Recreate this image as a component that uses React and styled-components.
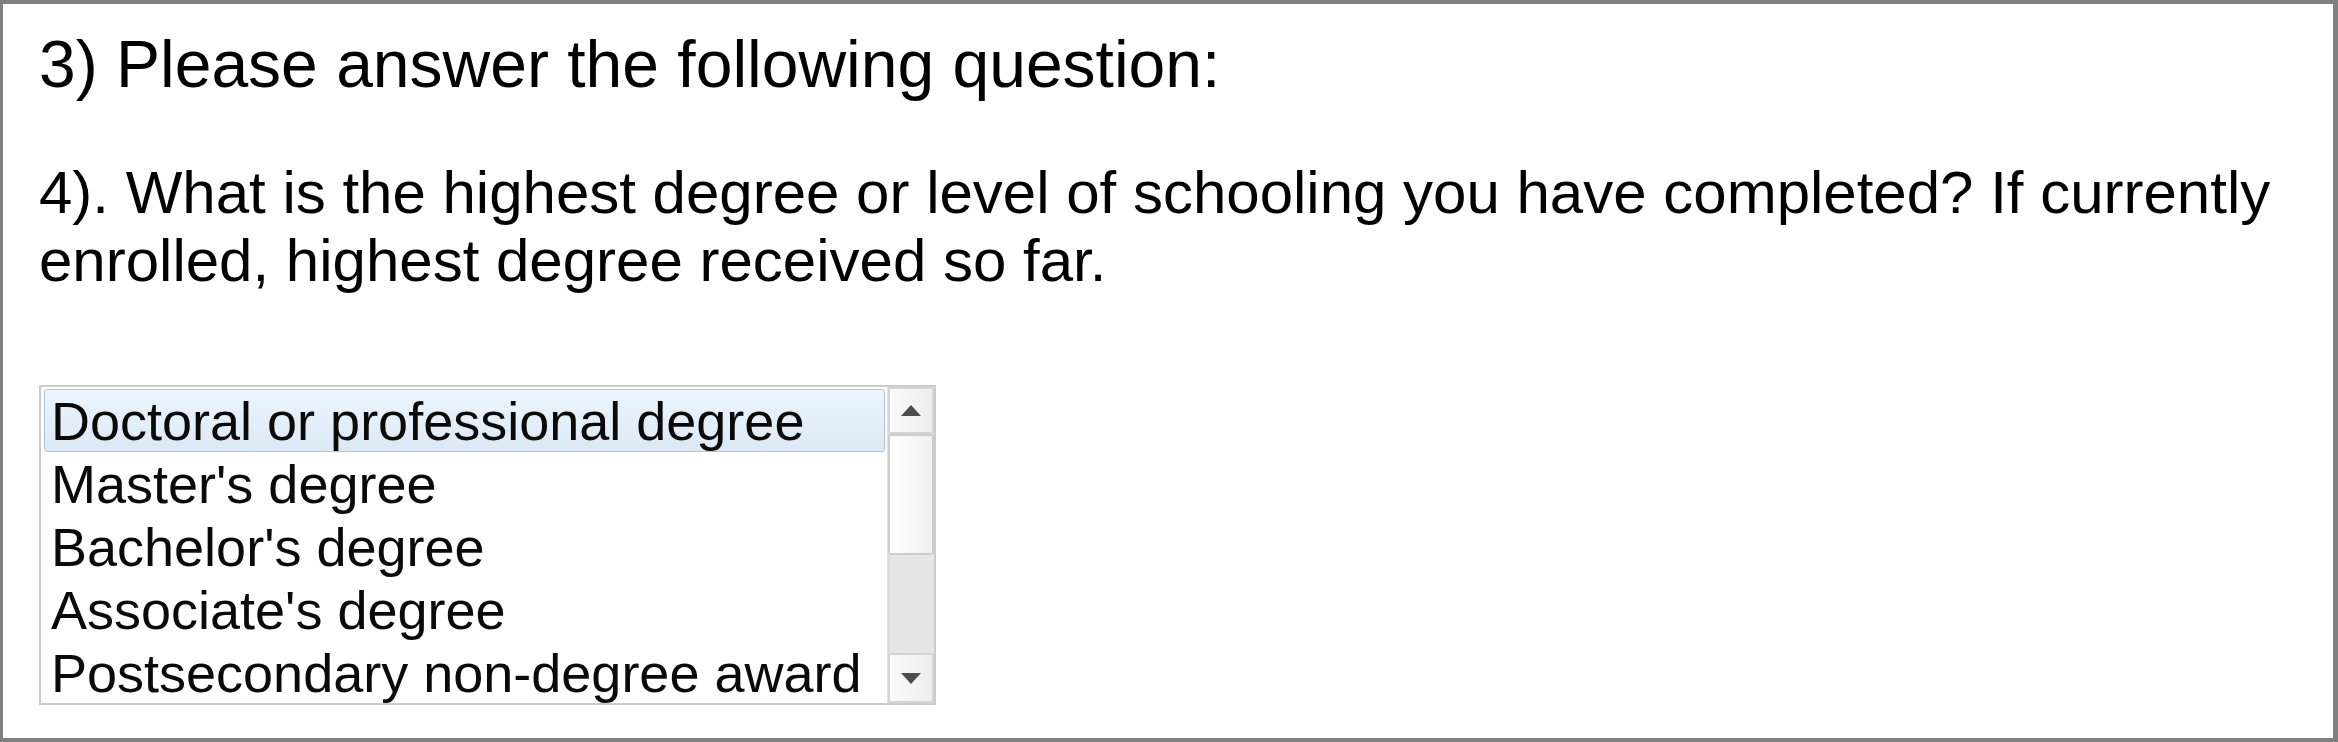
import styled, { createGlobalStyle } from 'styled-components'

const GlobalStyle = createGlobalStyle`
    html, body {
        margin: 0;
        padding: 0;
        background: #ffffff;
    }
    body {
        font-family: "Liberation Sans", Arial, sans-serif;
    }
`

const Frame = styled.div`
    box-sizing: border-box;
    width: 2338px;
    height: 742px;
    border-style: solid;
    border-color: #808080;
    border-width: 4px 5px 4px 3px;
    padding: 23px 40px 0 36px;
    background: #ffffff;
    color: #000000;
`

const Heading = styled.div`
    font-size: 66px;
    line-height: 75px;
`

const Question = styled.p`
    margin: 57px 0 0;
    font-size: 60px;
    line-height: 68px;
`

const ListBox = styled.div`
    box-sizing: border-box;
    margin-top: 90px;
    width: 897px;
    height: 320px;
    border: 2px solid #cbcbcb;
    display: flex;
    background: #ffffff;
`

const Options = styled.ul`
    list-style: none;
    margin: 0;
    padding: 2px 2px 0 3px;
    flex: 1;
    display: flex;
    flex-direction: column;
`

const Option = styled.li`
    box-sizing: border-box;
    height: 63px;
    display: flex;
    align-items: center;
    padding: 0 0 0 6px;
    font-size: 54px;
    color: #0a0a0a;
    white-space: nowrap;
    border: 1px solid ${p => (p.$selected ? '#a9c6dc' : 'transparent')};
    border-radius: 3px;
    background: ${p => (p.$selected ? 'linear-gradient(#ebf5fd, #dce9f5)' : 'transparent')};
`

const Scrollbar = styled.div`
    width: 46px;
    display: flex;
    flex-direction: column;
    border-left: 1px solid #e2e2e2;
    background: #e6e6e6;
`

const ArrowButton = styled.div`
    box-sizing: border-box;
    height: ${p => p.$h}px;
    display: flex;
    align-items: center;
    justify-content: center;
    border: 2px solid #d4d4d4;
    border-radius: 2px;
    background: linear-gradient(90deg, #fafafa, #eeeeee);
`

const Thumb = styled.div`
    box-sizing: border-box;
    height: 121px;
    border: 2px solid #cdcdcd;
    border-radius: 3px;
    background: linear-gradient(90deg, #ffffff, #f1f1f1);
`

const Track = styled.div`
    flex: 1;
    background: #e6e6e6;
    border-left: 2px solid #dadada;
`

const Triangle = ({ up }) => (
    <svg width="20" height="11" viewBox="0 0 20 11">
        <polygon points={up ? '10,0 20,11 0,11' : '0,0 20,0 10,11'} fill="#4d4d4d" />
    </svg>
)

const degrees = [
    'Doctoral or professional degree',
    "Master's degree",
    "Bachelor's degree",
    "Associate's degree",
    'Postsecondary non-degree award',
]

function App() {
    return (
        <>
            <GlobalStyle />
            <Frame>
                <Heading>3) Please answer the following question:</Heading>
                <Question>
                    4). What is the highest degree or level of schooling you have completed? If currently enrolled, highest degree received so far.
                </Question>
                <ListBox role="listbox">
                    <Options>
                        {degrees.map((d, i) => (
                            <Option key={d} $selected={i === 0} role="option">
                                {d}
                            </Option>
                        ))}
                    </Options>
                    <Scrollbar>
                        <ArrowButton $h={47}>
                            <Triangle up />
                        </ArrowButton>
                        <Thumb />
                        <Track />
                        <ArrowButton $h={50}>
                            <Triangle />
                        </ArrowButton>
                    </Scrollbar>
                </ListBox>
            </Frame>
        </>
    )
}

export default App
